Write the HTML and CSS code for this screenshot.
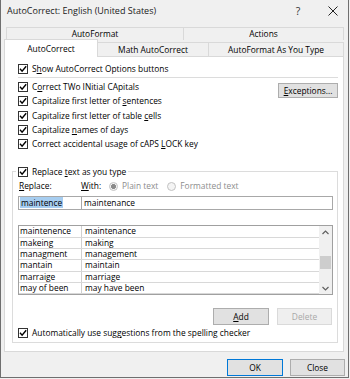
FILE: index.html
```html
<!DOCTYPE html>
<html lang="en">
<head>
  <meta charset="UTF-8" />
  <title>AutoCorrect: English (United States)</title>
  <link rel="stylesheet" href="styles.css">
</head>
<body>
  <div class="window">
    <div class="titlebar">
      <span class="title">AutoCorrect: English (United States)</span>
      <span class="help">?</span>
      <span class="close-x">
        <svg width="10" height="10" viewBox="0 0 10 10"><path d="M0.5 0.5 L9.5 9.5 M9.5 0.5 L0.5 9.5" stroke="#222" stroke-width="1"/></svg>
      </span>
    </div>

    <div class="tabs">
      <div class="tab-row back">
        <div class="tab t-autoformat">AutoFormat</div>
        <div class="tab t-actions">Actions</div>
      </div>
      <div class="tab-row front">
        <div class="tab t-autocorrect active">AutoCorrect</div>
        <div class="tab t-math">Math AutoCorrect</div>
        <div class="tab t-asyoutype">AutoFormat As You Type</div>
      </div>
    </div>

    <div class="panel">
      <div class="opt opt-top">
        <svg class="cb" viewBox="0 0 10 10"><rect x="0.5" y="0.5" width="9" height="9" fill="#fff" stroke="#333"/><path d="M2 4.8 L4.1 7.2 L8.2 2.3" fill="none" stroke="#000" stroke-width="1.4"/></svg>
        <span>S<u>h</u>ow AutoCorrect Options buttons</span>
      </div>
      <div class="sep"></div>

      <div class="main">
        <div class="opts">
          <div class="opt">
            <svg class="cb" viewBox="0 0 10 10"><rect x="0.5" y="0.5" width="9" height="9" fill="#fff" stroke="#333"/><path d="M2 4.8 L4.1 7.2 L8.2 2.3" fill="none" stroke="#000" stroke-width="1.4"/></svg>
            <span>C<u>o</u>rrect TWo INitial CApitals</span>
          </div>
          <div class="opt">
            <svg class="cb" viewBox="0 0 10 10"><rect x="0.5" y="0.5" width="9" height="9" fill="#fff" stroke="#333"/><path d="M2 4.8 L4.1 7.2 L8.2 2.3" fill="none" stroke="#000" stroke-width="1.4"/></svg>
            <span>Capitalize first letter of <u>s</u>entences</span>
          </div>
          <div class="opt">
            <svg class="cb" viewBox="0 0 10 10"><rect x="0.5" y="0.5" width="9" height="9" fill="#fff" stroke="#333"/><path d="M2 4.8 L4.1 7.2 L8.2 2.3" fill="none" stroke="#000" stroke-width="1.4"/></svg>
            <span>Capitalize first letter of table <u>c</u>ells</span>
          </div>
          <div class="opt">
            <svg class="cb" viewBox="0 0 10 10"><rect x="0.5" y="0.5" width="9" height="9" fill="#fff" stroke="#333"/><path d="M2 4.8 L4.1 7.2 L8.2 2.3" fill="none" stroke="#000" stroke-width="1.4"/></svg>
            <span>Capitalize <u>n</u>ames of days</span>
          </div>
          <div class="opt">
            <svg class="cb" viewBox="0 0 10 10"><rect x="0.5" y="0.5" width="9" height="9" fill="#fff" stroke="#333"/><path d="M2 4.8 L4.1 7.2 L8.2 2.3" fill="none" stroke="#000" stroke-width="1.4"/></svg>
            <span>Correct accidental usage of cAPS <u>L</u>OCK key</span>
          </div>
        </div>
        <button class="btn btn-exceptions"><u>E</u>xceptions...</button>
      </div>

      <fieldset class="group">
        <legend class="opt">
          <svg class="cb" viewBox="0 0 10 10"><rect x="0.5" y="0.5" width="9" height="9" fill="#fff" stroke="#333"/><path d="M2 4.8 L4.1 7.2 L8.2 2.3" fill="none" stroke="#000" stroke-width="1.4"/></svg>
          <span>Replace <u>t</u>ext as you type</span>
        </legend>

        <div class="labels">
          <span class="lbl-replace"><u>R</u>eplace:</span>
          <span class="lbl-with"><u>W</u>ith:</span>
          <span class="radio checked"></span>
          <span class="radio-text">Plain text</span>
          <span class="radio second"></span>
          <span class="radio-text">Formatted text</span>
        </div>

        <div class="inputs">
          <div class="field field-replace"><span class="selected">maintence</span></div>
          <div class="field field-with">maintenance</div>
        </div>

        <div class="list">
          <div class="rows">
            <div class="row"><span class="c1">maintenence</span><span class="c2">maintenance</span></div>
            <div class="row"><span class="c1">makeing</span><span class="c2">making</span></div>
            <div class="row"><span class="c1">managment</span><span class="c2">management</span></div>
            <div class="row"><span class="c1">mantain</span><span class="c2">maintain</span></div>
            <div class="row"><span class="c1">marraige</span><span class="c2">marriage</span></div>
            <div class="row"><span class="c1">may of been</span><span class="c2">may have been</span></div>
          </div>
          <div class="scrollbar">
            <div class="sb-arrow">
              <svg width="7" height="5" viewBox="0 0 7 5"><path d="M0.5 4 L3.5 1 L6.5 4" fill="none" stroke="#606060" stroke-width="1.2"/></svg>
            </div>
            <div class="sb-track"><div class="sb-thumb"></div></div>
            <div class="sb-arrow">
              <svg width="7" height="5" viewBox="0 0 7 5"><path d="M0.5 1 L3.5 4 L6.5 1" fill="none" stroke="#606060" stroke-width="1.2"/></svg>
            </div>
          </div>
        </div>

        <div class="actions">
          <button class="btn btn-add"><u>A</u>dd</button>
          <button class="btn btn-delete" disabled>Delete</button>
        </div>

        <div class="opt opt-auto">
          <svg class="cb" viewBox="0 0 10 10"><rect x="0.5" y="0.5" width="9" height="9" fill="#fff" stroke="#333"/><path d="M2 4.8 L4.1 7.2 L8.2 2.3" fill="none" stroke="#000" stroke-width="1.4"/></svg>
          <span>Automatically use sug<u>g</u>estions from the spelling checker</span>
        </div>
      </fieldset>
    </div>

    <div class="footer">
      <button class="btn btn-ok">OK</button>
      <button class="btn btn-close">Close</button>
    </div>
  </div>
</body>
</html>
```

FILE: styles.css
```css
body {
  margin: 0;
  background: #f0f0f0;
  font-family: "Open Sans", "Noto Sans", sans-serif;
  font-size: 8.4px;
  line-height: 12px;
  color: #000;
}

u {
  text-decoration-thickness: 1px;
  text-underline-offset: 1px;
}

.window {
  width: 349px;
  height: 378px;
  box-sizing: border-box;
  border: 1px solid #6f6f6f;
  border-top: none;
  background: #f0f0f0;
}

/* title bar */
.titlebar {
  display: flex;
  align-items: center;
  height: 22px;
}

.title {
  flex: 1;
  padding-left: 6px;
  font-size: 9px;
  color: #1a1a1a;
}

.help {
  width: 28px;
  margin-right: 6px;
  text-align: center;
  font-size: 10.5px;
  color: #333;
}

.close-x {
  width: 30px;
  display: flex;
  justify-content: center;
}

/* tabs */
.tabs {
  margin-top: 5px;
}

.tab-row {
  display: flex;
  align-items: flex-end;
}

.tab-row.back {
  height: 13px;
  padding-left: 5px;
}

.tab-row.front {
  height: 16px;
  padding-left: 3px;
}

.tab {
  box-sizing: border-box;
  border: 1px solid #d9d9d9;
  border-bottom: none;
  background: #f0f0f0;
  text-align: center;
  color: #000;
}

.tab + .tab {
  margin-left: -1px;
}

.tab-row.back .tab {
  height: 13px;
  line-height: 12px;
}

.t-autoformat { width: 178px; }
.t-actions { width: 161px; }

.tab-row.front .tab {
  height: 14px;
  line-height: 13px;
}

.tab-row.front .tab.active {
  position: relative;
  z-index: 1;
  height: 18px;
  margin-bottom: -1px;
  line-height: 17px;
  background: #fff;
  padding-bottom: 1px;
}

.t-autocorrect { width: 94px; }
.t-math { width: 112px; }
.t-asyoutype { width: 136px; }

/* panel */
.panel {
  box-sizing: border-box;
  width: 340px;
  height: 296px;
  margin-left: 3px;
  border: 1px solid #d9d9d9;
  background: #fff;
}

.opt {
  display: flex;
  align-items: center;
  gap: 4px;
  white-space: nowrap;
}

.cb {
  width: 10px;
  height: 10px;
  flex: none;
}

.opt-top {
  height: 14px;
  margin-top: 5px;
  padding-left: 13px;
}

.sep {
  height: 1px;
  margin: 1px 5px 0 13px;
  background: #dcdcdc;
}

.main {
  display: flex;
  justify-content: space-between;
  margin-top: 2px;
  padding: 0 5px 0 13px;
}

.opts .opt {
  height: 14.3px;
}

.btn {
  box-sizing: border-box;
  height: 17px;
  padding: 0;
  border: 1px solid #adadad;
  background: #e1e1e1;
  font-family: inherit;
  font-size: 8.4px;
  color: #000;
}

.btn-exceptions {
  width: 60px;
  height: 15px;
  margin-top: 3px;
}

/* replace group */
.group {
  margin: 14px 5px 0 7px;
  padding: 0 4px 3px 5px;
  border: 1px solid #dcdcdc;
  min-width: 0;
}

.group legend {
  height: 13px;
  padding: 0 2px;
  margin-left: -2px;
}

.labels {
  display: flex;
  align-items: center;
  height: 12px;
  margin-top: 2px;
}

.lbl-replace {
  width: 62px;
  padding-left: 1px;
}

.lbl-with {
  width: 28px;
}

.radio {
  box-sizing: border-box;
  width: 9px;
  height: 9px;
  border: 1px solid #c2c2c2;
  border-radius: 50%;
  background: #f4f4f4;
  margin-right: 4px;
  flex: none;
}

.radio.checked {
  background: radial-gradient(circle, #8a8a8a 0 2.2px, #f4f4f4 2.7px);
}

.radio.second {
  margin-left: 9px;
}

.radio-text {
  color: #8d8d8d;
}

.inputs {
  display: flex;
  height: 14px;
  margin-top: 4px;
}

.field {
  box-sizing: border-box;
  height: 14px;
  border: 1px solid #a8a8a8;
  line-height: 12px;
  white-space: nowrap;
}

.field-replace {
  width: 64px;
  padding-left: 1px;
}

.field-with {
  flex: 1;
  margin-left: -1px;
  padding-left: 2px;
}

.selected {
  background: #a6cdf0;
  padding: 0 1px;
}

.list {
  display: flex;
  box-sizing: border-box;
  height: 70px;
  margin-top: 15px;
  border: 1px solid #a0a0a0;
}

.rows {
  flex: 1;
}

.row {
  display: flex;
  box-sizing: border-box;
  height: 11.33px;
  border-bottom: 1px solid #d8d8d8;
  line-height: 10px;
  white-space: nowrap;
}

.row .c1 {
  box-sizing: border-box;
  width: 63px;
  padding-left: 1px;
  border-right: 1px solid #d0d0d0;
}

.row .c2 {
  padding-left: 3px;
}

.scrollbar {
  display: flex;
  flex-direction: column;
  width: 13px;
  background: #f0f0f0;
}

.sb-arrow {
  height: 12px;
  display: flex;
  align-items: center;
  justify-content: center;
}

.sb-track {
  flex: 1;
  padding: 18px 1px 0;
}

.sb-thumb {
  height: 13px;
  background: #cdcdcd;
}

.actions {
  display: flex;
  justify-content: flex-end;
  gap: 8px;
  margin-top: 13px;
  padding-right: 1px;
}

.btn-add {
  width: 56px;
}

.btn-delete {
  width: 55px;
  background: #efefef;
  border-color: #dadada;
  color: #a8a8a8;
}

.opt-auto {
  height: 12px;
  margin-top: 2px;
}

/* footer */
.footer {
  display: flex;
  justify-content: flex-end;
  gap: 7px;
  margin-top: 7px;
  padding-right: 3px;
}

.btn-ok {
  width: 56px;
  border-color: #0078d7;
}

.btn-close {
  width: 55px;
}
```
